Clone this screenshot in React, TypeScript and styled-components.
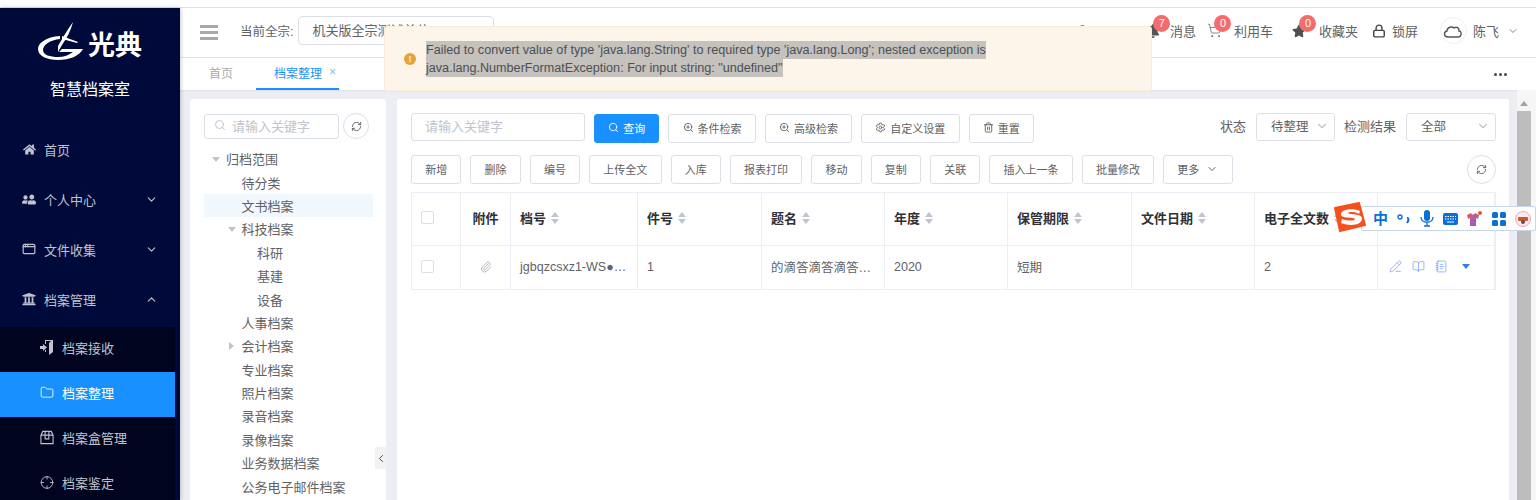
import React from "react";
import styled, { createGlobalStyle } from "styled-components";
import {
  BookOpen,
  ChevronDown,
  ChevronLeft,
  ChevronUp,
  Crosshair,
  Folder,
  Lock,
  NotebookText,
  Paperclip,
  PencilLine,
  RefreshCw,
  Search,
  Settings,
  ShoppingCart,
  Trash2,
  ZoomIn,
} from "lucide-react";
import { FaBell, FaHome, FaStar, FaUniversity, FaUserFriends } from "react-icons/fa";
import { LuAppWindow } from "react-icons/lu";

const FONT = `"Liberation Sans", "Noto Sans CJK SC", sans-serif`;

const GlobalStyle = createGlobalStyle`
  html, body {
    margin: 0;
    padding: 0;
    background: #fff;
    overflow: hidden;
  }
  * {
    box-sizing: border-box;
  }
`;

const Page = styled.div`
  position: relative;
  width: 1536px;
  height: 500px;
  overflow: hidden;
  padding-top: 7px;
  font-family: ${FONT};
  font-size: 13px;
  color: #606266;
`;

const Frame = styled.div`
  display: flex;
  height: 493px;
  border-top: 1px solid #e3e3e6;
`;

const Sidebar = styled.aside`
  flex: 0 0 180px;
  background: #000a3a;
  color: #bfc3cf;
  box-shadow: 1px 0 4px rgba(0, 0, 0, 0.2);
  z-index: 1;
`;

const Brand = styled.div`
  height: 117px;
  padding-top: 14px;
  display: flex;
  flex-direction: column;
  align-items: center;
`;

const LogoRow = styled.div`
  display: flex;
  align-items: center;
  height: 38px;
  gap: 5px;
`;

const LogoText = styled.span`
  font-size: 27px;
  font-weight: 700;
  line-height: 38px;
  color: #fff;
  margin-top: 9px;
`;

const BrandTitle = styled.div`
  margin-top: 19px;
  font-size: 16px;
  line-height: 22px;
  color: #fff;
`;

const MenuItem = styled.div`
  height: 50px;
  display: flex;
  align-items: center;
  padding: 0 0 2px 22px;
  gap: 8px;
  font-size: 13px;
`;

const MenuIcon = styled.span`
  display: flex;
  width: 14px;
  justify-content: center;
  color: #bfc3cf;
`;

const MenuArrow = styled.span`
  display: flex;
  margin-left: auto;
  margin-right: 22px;
`;

const FlippedUsers = styled(FaUserFriends)`
  transform: scaleX(-1);
`;

const SubMenu = styled.div`
  width: 175px;
  margin-top: 2px;
  background: #00041f;
`;

const SubItem = styled.div<{ $active?: boolean }>`
  height: 45px;
  display: flex;
  align-items: center;
  padding: 0 0 5px 40px;
  gap: 8px;
  background: ${(p) => (p.$active ? "#1890ff" : "transparent")};
  color: ${(p) => (p.$active ? "#fff" : "#bfc3cf")};
`;

const ActiveIcon = styled(MenuIcon)`
  color: #fff;
`;

const Main = styled.div`
  flex: 1;
  min-width: 0;
  display: flex;
  flex-direction: column;
`;

const Header = styled.header`
  height: 50px;
  flex: none;
  display: flex;
  align-items: center;
  background: #fff;
  border-bottom: 1px solid #e3e3e6;
  padding-left: 20px;
`;

const Burger = styled.span`
  display: flex;
  flex-direction: column;
  gap: 3px;
  width: 18px;
  margin-right: 22px;
  margin-top: -1px;
  i {
    height: 3px;
    background: #a8a8a8;
  }
`;

const HeaderLabel = styled.span`
  font-size: 12.5px;
  margin-right: 5px;
  margin-top: -5px;
`;

const OrgSelect = styled.div`
  width: 196px;
  height: 29px;
  border: 1px solid #dcdfe6;
  border-radius: 4px;
  padding-left: 13px;
  line-height: 27px;
  font-size: 13px;
  margin-top: -4px;
`;

const HeaderRight = styled.div`
  margin-left: auto;
  display: flex;
  align-items: center;
  height: 100%;
  padding-right: 17px;
  padding-bottom: 4px;
`;

const HeaderItem = styled.div<{ $gap: number; $iconGap?: number }>`
  position: relative;
  display: flex;
  align-items: center;
  gap: ${(p) => p.$iconGap ?? 6}px;
  margin-right: ${(p) => p.$gap}px;
  font-size: 13px;
  color: #606266;
`;

const Badge = styled.span`
  position: absolute;
  left: 7.5px;
  top: -6px;
  width: 17px;
  height: 17px;
  border-radius: 50%;
  background: #f56c6c;
  color: #fff;
  font-size: 11px;
  line-height: 17px;
  text-align: center;
`;

const Avatar = styled.span`
  width: 27px;
  height: 27px;
  border-radius: 50%;
  border: 1px solid #eee;
  display: flex;
  align-items: center;
  justify-content: center;
`;

const UserArrow = styled(ChevronDown)`
  margin-left: 2px;
  color: #888;
`;

const TabBar = styled.div`
  height: 32px;
  flex: none;
  display: flex;
  background: #fff;
  padding-left: 29px;
  position: relative;
  box-shadow: 0 1px 2px rgba(0, 0, 0, 0.06);
`;

const Tab = styled.div<{ $active?: boolean }>`
  height: 32px;
  display: flex;
  align-items: center;
  gap: 7px;
  padding-bottom: 2px;
  font-size: 12px;
  color: ${(p) => (p.$active ? "#1890ff" : "#aaa")};
  padding-left: ${(p) => (p.$active ? "18px" : "0")};
  padding-right: ${(p) => (p.$active ? "3px" : "0")};
  margin-left: ${(p) => (p.$active ? "23px" : "0")};
  border-bottom: 2px solid ${(p) => (p.$active ? "#1890ff" : "transparent")};
`;

const TabClose = styled.span`
  font-size: 12px;
  color: #7fbcf7;
`;

const Dots = styled.span`
  margin-left: auto;
  margin-right: 29px;
  align-self: center;
  display: flex;
  gap: 2px;
  i {
    width: 3px;
    height: 3px;
    border-radius: 50%;
    background: #44474f;
  }
`;

const Content = styled.div`
  flex: 1;
  display: flex;
  min-height: 0;
  background: #eceef3;
  padding: 9px 0 0 10px;
`;

const TreePanel = styled.section`
  position: relative;
  flex: 0 0 196px;
  background: #fff;
  border-radius: 3px 3px 0 0;
  padding: 14px 0 0 14px;
`;

const TreeTools = styled.div`
  display: flex;
  align-items: center;
  gap: 4px;
  margin-bottom: 8px;
`;

const TreeSearch = styled.div`
  width: 135px;
  height: 25px;
  border: 1px solid #dcdfe6;
  border-radius: 3px;
  display: flex;
  align-items: center;
  gap: 6px;
  padding: 0 0 2px 9px;
  color: #c0c4cc;
  font-size: 13px;
`;

const CircleButton = styled.span<{ $size: number; $push?: boolean }>`
  width: ${(p) => p.$size}px;
  height: ${(p) => p.$size}px;
  margin-left: ${(p) => (p.$push ? "auto" : "0")};
  border-radius: 50%;
  border: 1px solid #dcdfe6;
  display: flex;
  align-items: center;
  justify-content: center;
  color: #606266;
  flex: none;
`;

const TreeRow = styled.div<{ $depth: number; $active?: boolean }>`
  width: 169px;
  height: 23.4px;
  display: flex;
  align-items: center;
  padding-left: ${(p) => 22 + p.$depth * 15.5}px;
  position: relative;
  background: ${(p) => (p.$active ? "#f0f7fd" : "transparent")};
  font-size: 13px;
  color: #606266;
  white-space: nowrap;
`;

const TreeCaret = styled.span<{ $open: boolean }>`
  position: absolute;
  margin-left: -13px;
  width: 0;
  height: 0;
  ${(p) =>
    p.$open
      ? `border-left: 4px solid transparent; border-right: 4px solid transparent; border-top: 5px solid #c0c4cc; margin-top: 2px; margin-left: -14px;`
      : `border-top: 4px solid transparent; border-bottom: 4px solid transparent; border-left: 5px solid #c0c4cc;`}
`;

const Collapse = styled.span`
  position: absolute;
  left: 185px;
  top: 348px;
  width: 12px;
  height: 22px;
  background: #f2f2f2;
  color: #505050;
  display: flex;
  align-items: center;
  justify-content: center;
`;

const ListPanel = styled.section`
  flex: 0 0 1112px;
  margin: 0 8px 0 11px;
  background: #fff;
  border-radius: 3px 3px 0 0;
  padding: 14px 13px 0 14px;
`;

const Toolbar = styled.div`
  display: flex;
  align-items: center;
  gap: 9px;
  height: 30px;
`;

const SearchInput = styled.div`
  width: 174px;
  height: 28px;
  margin-top: -2px;
  border: 1px solid #dcdfe6;
  border-radius: 3px;
  padding-left: 13px;
  line-height: 25px;
  color: #c0c4cc;
  font-size: 13px;
`;

const Button = styled.span<{ $primary?: boolean }>`
  height: 29px;
  display: inline-flex;
  align-items: center;
  gap: 4px;
  padding: 0 13.2px 1px;
  border: 1px solid ${(p) => (p.$primary ? "#1890ff" : "#dcdfe6")};
  border-radius: 3px;
  background: ${(p) => (p.$primary ? "#1890ff" : "#fff")};
  color: ${(p) => (p.$primary ? "#fff" : "#606266")};
  font-size: 11px;
  white-space: nowrap;
`;

const MoreArrow = styled(ChevronDown)`
  margin-left: 3px;
`;

const FilterGroup = styled.div`
  margin-left: auto;
  display: flex;
  align-items: center;
  margin-top: -2px;
`;

const FilterLabel = styled.span`
  font-size: 13px;
  margin: 0 10px 3px 0;
`;

const FilterSelect = styled.div<{ $width: number }>`
  width: ${(p) => p.$width}px;
  height: 28px;
  border: 1px solid #dcdfe6;
  border-radius: 3px;
  display: flex;
  align-items: center;
  justify-content: space-between;
  padding: 0 5px 3px 14px;
  margin-right: 9px;
  font-size: 12.5px;
  color: #606266;
  &:last-child {
    margin-right: 0;
  }
`;

const ActionRow = styled(Toolbar)`
  margin-top: 11px;
`;

const Table = styled.div`
  margin-top: 8px;
  width: 1085px;
  border-top: 1px solid #ebeef5;
  border-left: 1px solid #ebeef5;
  border-right: 2px solid #ebeef5;
  display: grid;
  grid-template-columns: 49px 50px 127px 124px 123px 123px 124px 123px 123px 117px;
`;

const Cell = styled.div<{ $head?: boolean; $center?: boolean }>`
  height: ${(p) => (p.$head ? "53px" : "44px")};
  display: flex;
  align-items: center;
  justify-content: ${(p) => (p.$center ? "center" : "flex-start")};
  padding: 0 ${(p) => (p.$center ? "0" : "9px")};
  padding-bottom: ${(p) => (p.$head ? "3px" : "2px")};
  gap: 5px;
  border-right: 1px solid #ebeef5;
  border-bottom: 1px solid #ebeef5;
  font-size: ${(p) => (p.$head ? "13px" : "12.5px")};
  font-weight: ${(p) => (p.$head ? 700 : 400)};
  color: ${(p) => (p.$head ? "#2f3136" : "#606266")};
  white-space: nowrap;
  overflow: hidden;
  &:nth-child(10n) {
    border-right: 0;
  }
`;

const Check = styled.span`
  width: 13px;
  height: 13px;
  border: 1px solid #dcdfe6;
  border-radius: 2px;
  background: #fff;
`;

const Sort = styled.span`
  display: inline-flex;
  flex-direction: column;
  gap: 2px;
  i {
    width: 0;
    height: 0;
    border-left: 4px solid transparent;
    border-right: 4px solid transparent;
  }
  i:first-child {
    border-bottom: 5px solid #c0c4cc;
  }
  i:last-child {
    border-top: 5px solid #c0c4cc;
  }
`;

const RowActions = styled.span`
  display: flex;
  align-items: center;
  gap: 10px;
  padding-left: 2px;
  color: #6b9cff;
`;

const BlueCaret = styled.span`
  width: 0;
  height: 0;
  margin-left: 4px;
  border-left: 4px solid transparent;
  border-right: 4px solid transparent;
  border-top: 5px solid #2f7ff0;
`;

const ScrollBar = styled.div`
  position: relative;
  flex: 0 0 19px;
  margin-top: -9px;
  padding-top: 21px;
  background: #f6f6f7;
`;

const ScrollThumb = styled.div`
  width: 14px;
  height: 100%;
  background: #bdbdbd;
`;

const ScrollArrow = styled.span`
  position: absolute;
  top: 11px;
  left: 3px;
  width: 0;
  height: 0;
  border-left: 4px solid transparent;
  border-right: 4px solid transparent;
  border-bottom: 5px solid #a3a3a3;
`;

const Alert = styled.div`
  position: absolute;
  left: 384px;
  top: 26px;
  width: 768px;
  height: 65px;
  display: flex;
  align-items: center;
  background: #fdf5ea;
  border: 1px solid #faecd8;
  border-radius: 3px;
  padding-left: 19px;
  z-index: 5;
`;

const AlertDot = styled.span`
  width: 12px;
  height: 12px;
  border-radius: 50%;
  background: #e6a23c;
  color: #fdf5ea;
  font-size: 9px;
  font-weight: 700;
  line-height: 12px;
  text-align: center;
  margin-right: 10px;
  flex: none;
`;

const AlertText = styled.div`
  font-size: 12.62px;
  line-height: 18px;
  color: #4a5058;
  white-space: nowrap;
  span {
    background: #c5c1bc;
    padding: 2px 0;
  }
`;

const ImeBar = styled.div`
  position: absolute;
  left: 1361px;
  top: 206px;
  width: 175px;
  height: 25px;
  display: flex;
  align-items: center;
  gap: 9px;
  padding-left: 11px;
  background: #fff;
  border: 1px solid #c7d6e8;
  border-radius: 2px;
  z-index: 4;
  color: #0a6fd6;
`;

const ImeLogo = styled.span`
  position: absolute;
  left: 1334px;
  top: 202px;
  z-index: 5;
  display: flex;
`;

const ImeChar = styled.span`
  font-size: 15px;
  font-weight: 700;
  line-height: 1;
`;

const treeRows: { label: string; depth: number; caret?: "open" | "closed"; active?: boolean }[] = [
  { label: "归档范围", depth: 0, caret: "open" },
  { label: "待分类", depth: 1 },
  { label: "文书档案", depth: 1, active: true },
  { label: "科技档案", depth: 1, caret: "open" },
  { label: "科研", depth: 2 },
  { label: "基建", depth: 2 },
  { label: "设备", depth: 2 },
  { label: "人事档案", depth: 1 },
  { label: "会计档案", depth: 1, caret: "closed" },
  { label: "专业档案", depth: 1 },
  { label: "照片档案", depth: 1 },
  { label: "录音档案", depth: 1 },
  { label: "录像档案", depth: 1 },
  { label: "业务数据档案", depth: 1 },
  { label: "公务电子邮件档案", depth: 1 },
];

const actions = ["新增", "删除", "编号", "上传全文", "入库", "报表打印", "移动", "复制", "关联", "插入上一条", "批量修改"];

const columns = ["档号", "件号", "题名", "年度", "保管期限", "文件日期", "电子全文数"];

const LogoMark = () => (
  <svg width="45" height="38" viewBox="0 0 45 38" fill="#fff">
    <path d="M22 14C8 15 0 21 0 27c0 7 9 11 20 11 12 0 21-4 25-11H24l-3 3h14c-4 3-9 5-15 5-8 0-15-2-15-7 0-5 7-10 17-11z" />
    <path d="M35 0c-2 8-6 16-11 23l-4 7v-6C25 15 30 7 35 0z" />
    <path d="M24 14l16 6-1 1-15-4z" />
  </svg>
);

const DoorIcon = () => (
  <svg width="14" height="15" viewBox="0 0 14 15" fill="#bfc3cf">
    <path d="M5 0h8v12l-4 3V3l2-2H6v3H5z" />
    <path d="M0 6h3V4l4 3.5L3 11V9H0z" />
    <path d="M5 10h1v2H5z" />
  </svg>
);

const BoxIcon = () => (
  <svg width="15" height="15" viewBox="0 0 15 15" fill="none" stroke="#bfc3cf" strokeWidth="1.2">
    <path d="M1 5l2-4h9l2 4v9H1z" />
    <path d="M1 5h13M5.5 1v8h4V1" />
  </svg>
);

const SogouLogo = () => (
  <svg width="32" height="30" viewBox="0 0 32 30">
    <path d="M1 6 25 1l6 22-25 6z" fill="#f4511e" stroke="#f4511e" strokeWidth="2" strokeLinejoin="round" />
    <path
      d="M26 9C19 6 8 7 7 12c-1 5 14 3 14 5 0 2-8 2-13 0l-1 4c8 3 20 3 21-4 1-6-14-4-14-6 0-1 7-2 11 1z"
      fill="#fff"
    />
  </svg>
);

const ImeIcons = () => (
  <>
    <ImeChar>中</ImeChar>
    <svg width="14" height="14" viewBox="0 0 14 14">
      <circle cx="3" cy="5" r="2" fill="none" stroke="#0a6fd6" strokeWidth="1.4" />
      <path d="M10 6c2 0 2 2 0 5" fill="none" stroke="#0a6fd6" strokeWidth="2" />
    </svg>
    <svg width="14" height="17" viewBox="0 0 14 17">
      <rect x="4" y="0" width="6" height="11" rx="3" fill="#0a6fd6" />
      <path d="M1 7c0 7 12 7 12 0M7 13v3M4 16h6" fill="none" stroke="#0a6fd6" strokeWidth="1.3" />
    </svg>
    <svg width="15" height="12" viewBox="0 0 15 12">
      <rect width="15" height="12" rx="2" fill="#0a6fd6" />
      <path d="M2 3.5h11M2 6h11" stroke="#fff" strokeDasharray="1.5 1" />
      <path d="M4 9h7" stroke="#fff" />
    </svg>
    <svg width="16" height="16" viewBox="0 0 16 16">
      <defs>
        <linearGradient id="shirt" x1="0" y1="0" x2="1" y2="1">
          <stop offset="0" stopColor="#ea5b5b" />
          <stop offset="1" stopColor="#7a5bf0" />
        </linearGradient>
      </defs>
      <path d="M0 4l4-2c1 2 3 2 4 0l4 2-1 4-2-1v8H3V7L1 8z" fill="url(#shirt)" />
      <circle cx="13" cy="2" r="2" fill="#f4511e" />
    </svg>
    <svg width="14" height="14" viewBox="0 0 14 14" fill="#0a6fd6">
      <rect width="6" height="6" rx="1.5" />
      <rect x="8" width="6" height="6" rx="1.5" />
      <rect y="8" width="6" height="6" rx="1.5" />
      <rect x="8" y="8" width="6" height="6" rx="1.5" />
    </svg>
    <svg width="16" height="16" viewBox="0 0 16 16">
      <circle cx="8" cy="8" r="7.5" fill="#ffe9ec" stroke="#f3a3b5" />
      <rect x="3" y="6" width="10" height="4" rx="1" fill="#d2552b" />
      <circle cx="8" cy="11" r="2" fill="#555" />
    </svg>
  </>
);

const App = () => {
  return (
    <Page>
      <GlobalStyle />
      <Frame>
        <Sidebar>
          <Brand>
            <LogoRow>
              <LogoMark />
              <LogoText>光典</LogoText>
            </LogoRow>
            <BrandTitle>智慧档案室</BrandTitle>
          </Brand>
          <MenuItem>
            <MenuIcon><FaHome size={13} /></MenuIcon>首页
          </MenuItem>
          <MenuItem>
            <MenuIcon><FlippedUsers size={15} /></MenuIcon>个人中心
            <MenuArrow><ChevronDown size={13} /></MenuArrow>
          </MenuItem>
          <MenuItem>
            <MenuIcon><LuAppWindow size={14} /></MenuIcon>文件收集
            <MenuArrow><ChevronDown size={13} /></MenuArrow>
          </MenuItem>
          <MenuItem>
            <MenuIcon><FaUniversity size={14} /></MenuIcon>档案管理
            <MenuArrow><ChevronUp size={13} /></MenuArrow>
          </MenuItem>
          <SubMenu>
            <SubItem><MenuIcon><DoorIcon /></MenuIcon>档案接收</SubItem>
            <SubItem $active><ActiveIcon><Folder size={15} strokeWidth={1.5} /></ActiveIcon>档案整理</SubItem>
            <SubItem><MenuIcon><BoxIcon /></MenuIcon>档案盒管理</SubItem>
            <SubItem><MenuIcon><Crosshair size={15} strokeWidth={1.6} /></MenuIcon>档案鉴定</SubItem>
          </SubMenu>
        </Sidebar>
        <Main>
          <Header>
            <Burger><i /><i /><i /></Burger>
            <HeaderLabel>当前全宗:</HeaderLabel>
            <OrgSelect>机关版全宗测试单位</OrgSelect>
            <HeaderRight>
              <HeaderItem $gap={56}>
                <Search size={14} color="#555" />
              </HeaderItem>
              <HeaderItem $gap={11} $iconGap={10}>
                <FaBell size={14} color="#555" />
                <Badge>7</Badge>
                消息
              </HeaderItem>
              <HeaderItem $gap={19} $iconGap={12}>
                <ShoppingCart size={15} strokeWidth={1.2} />
                <Badge>0</Badge>
                利用车
              </HeaderItem>
              <HeaderItem $gap={14} $iconGap={13}>
                <FaStar size={14} color="#505050" />
                <Badge>0</Badge>
                收藏夹
              </HeaderItem>
              <HeaderItem $gap={22}>
                <Lock size={14} strokeWidth={2.4} color="#444" />
                锁屏
              </HeaderItem>
              <HeaderItem $gap={0}>
                <Avatar>
                  <svg width="20" height="14" viewBox="0 0 20 14">
                    <path
                      d="M5 13C1 13 0 8 4 7c0-4 5-5 7-3 3-2 5 0 5 3 3 0 3 6-1 6z"
                      fill="#fff"
                      stroke="#555"
                      strokeWidth="1.4"
                    />
                  </svg>
                </Avatar>
                陈飞
                <UserArrow size={12} />
              </HeaderItem>
            </HeaderRight>
          </Header>
          <TabBar>
            <Tab>首页</Tab>
            <Tab $active>档案整理<TabClose>×</TabClose></Tab>
            <Dots><i /><i /><i /></Dots>
          </TabBar>
          <Content>
            <TreePanel>
              <TreeTools>
                <TreeSearch><Search size={12} />请输入关键字</TreeSearch>
                <CircleButton $size={26}><RefreshCw size={11} /></CircleButton>
              </TreeTools>
              {treeRows.map((row) => (
                <TreeRow key={row.label} $depth={row.depth} $active={row.active}>
                  {row.caret && <TreeCaret $open={row.caret === "open"} />}
                  {row.label}
                </TreeRow>
              ))}
              <Collapse><ChevronLeft size={13} /></Collapse>
            </TreePanel>
            <ListPanel>
              <Toolbar>
                <SearchInput>请输入关键字</SearchInput>
                <Button $primary><Search size={11} />查询</Button>
                <Button><ZoomIn size={11} />条件检索</Button>
                <Button><ZoomIn size={11} />高级检索</Button>
                <Button><Settings size={11} />自定义设置</Button>
                <Button><Trash2 size={11} />重置</Button>
                <FilterGroup>
                  <FilterLabel>状态</FilterLabel>
                  <FilterSelect $width={79}>待整理<ChevronDown size={14} color="#c0c4cc" /></FilterSelect>
                  <FilterLabel>检测结果</FilterLabel>
                  <FilterSelect $width={90}>全部<ChevronDown size={14} color="#c0c4cc" /></FilterSelect>
                </FilterGroup>
              </Toolbar>
              <ActionRow>
                {actions.map((label) => (
                  <Button key={label}>{label}</Button>
                ))}
                <Button>更多<MoreArrow size={12} /></Button>
                <CircleButton $size={29} $push><RefreshCw size={11} /></CircleButton>
              </ActionRow>
              <Table>
                <Cell $head><Check /></Cell>
                <Cell $head $center>附件</Cell>
                {columns.map((name) => (
                  <Cell $head key={name}>{name}<Sort><i /><i /></Sort></Cell>
                ))}
                <Cell $head />
                <Cell><Check /></Cell>
                <Cell $center><Paperclip size={12} color="#bbb" /></Cell>
                <Cell>jgbqzcsxz1-WS●…</Cell>
                <Cell>1</Cell>
                <Cell>的滴答滴答滴答…</Cell>
                <Cell>2020</Cell>
                <Cell>短期</Cell>
                <Cell />
                <Cell>2</Cell>
                <Cell>
                  <RowActions>
                    <PencilLine size={13} strokeWidth={1.3} />
                    <BookOpen size={13} strokeWidth={1.3} />
                    <NotebookText size={13} strokeWidth={1.3} />
                    <BlueCaret />
                  </RowActions>
                </Cell>
              </Table>
            </ListPanel>
            <ScrollBar>
              <ScrollArrow />
              <ScrollThumb />
            </ScrollBar>
          </Content>
        </Main>
      </Frame>
      <Alert>
        <AlertDot>!</AlertDot>
        <AlertText>
          <span>Failed to convert value of type 'java.lang.String' to required type 'java.lang.Long'; nested exception is</span>
          <br />
          <span>java.lang.NumberFormatException: For input string: "undefined"</span>
        </AlertText>
      </Alert>
      <ImeBar><ImeIcons /></ImeBar>
      <ImeLogo><SogouLogo /></ImeLogo>
    </Page>
  );
};

export default App;
